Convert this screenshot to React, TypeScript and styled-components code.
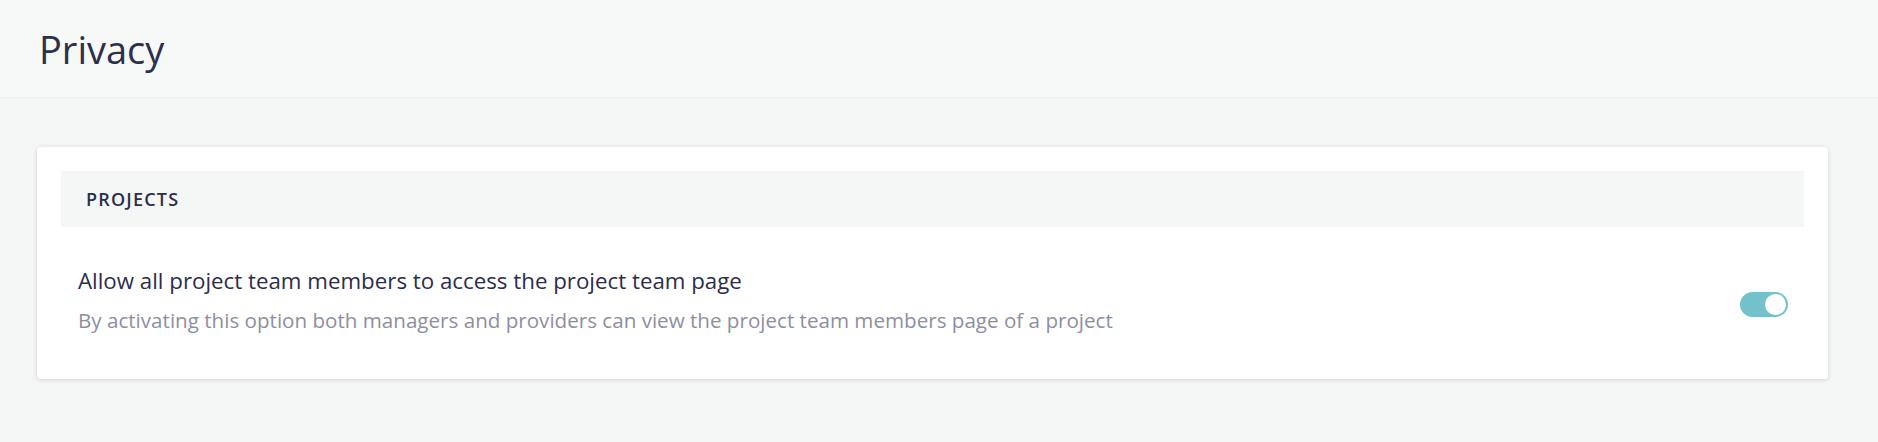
import React from "react";
import styled, { createGlobalStyle } from "styled-components";

const GlobalStyle = createGlobalStyle`
  html, body {
    margin: 0;
    padding: 0;
    background: #f5f6f6;
    font-family: "Open Sans", "Liberation Sans", sans-serif;
  }
`;

const Page = styled.div`
  min-height: 442px;
  background: #f5f6f6;
`;

const Header = styled.header`
  height: 97px;
  display: flex;
  align-items: center;
  padding: 0 39px;
  background: #f7f8f8;
  border-bottom: 1px solid #eceeef;
`;

const Title = styled.h1`
  margin: 0;
  font-size: 38px;
  font-weight: 400;
  color: #2c2f4d;
`;

const Main = styled.main`
  padding: 49px 50px 40px 37px;
`;

const Card = styled.section`
  background: #fff;
  border-radius: 4px;
  box-shadow: 0 1px 5px rgba(30, 40, 50, 0.16);
  padding: 24px;
`;

const SectionHeader = styled.div`
  height: 56px;
  display: flex;
  align-items: center;
  padding: 0 25px;
  background: #f5f6f6;
  font-size: 18px;
  font-weight: 600;
  letter-spacing: 1.2px;
  text-transform: uppercase;
  color: #2b2e4a;
`;

const Row = styled.div`
  display: flex;
  align-items: center;
  justify-content: space-between;
  padding: 40px 16px 22px 17px;
`;

const Texts = styled.div`
  display: flex;
  flex-direction: column;
  gap: 12px;
`;

const Label = styled.div`
  font-size: 22.3px;
  line-height: 28px;
  color: #2b2e4a;
`;

const Hint = styled.div`
  font-size: 20.6px;
  line-height: 26px;
  color: #8d8fa0;
`;

const Switch = styled.button<{ $on: boolean }>`
  position: relative;
  width: 48px;
  height: 25px;
  margin-top: 8px;
  padding: 0;
  border: none;
  border-radius: 13px;
  background: ${(p) => (p.$on ? "#73c1ca" : "#d5d8dc")};
  cursor: pointer;

  &::after {
    content: "";
    position: absolute;
    top: 2px;
    left: ${(p) => (p.$on ? "25px" : "2px")};
    width: 21px;
    height: 21px;
    border-radius: 50%;
    background: #fff;
  }
`;

export default function App() {
  const [teamAccess, setTeamAccess] = React.useState(true);

  return (
    <Page>
      <GlobalStyle />
      <Header>
        <Title>Privacy</Title>
      </Header>
      <Main>
        <Card>
          <SectionHeader>Projects</SectionHeader>
          <Row>
            <Texts>
              <Label>Allow all project team members to access the project team page</Label>
              <Hint>
                By activating this option both managers and providers can view the project team members page of a project
              </Hint>
            </Texts>
            <Switch
              type="button"
              role="switch"
              aria-checked={teamAccess}
              $on={teamAccess}
              onClick={() => setTeamAccess(!teamAccess)}
            />
          </Row>
        </Card>
      </Main>
    </Page>
  );
}
